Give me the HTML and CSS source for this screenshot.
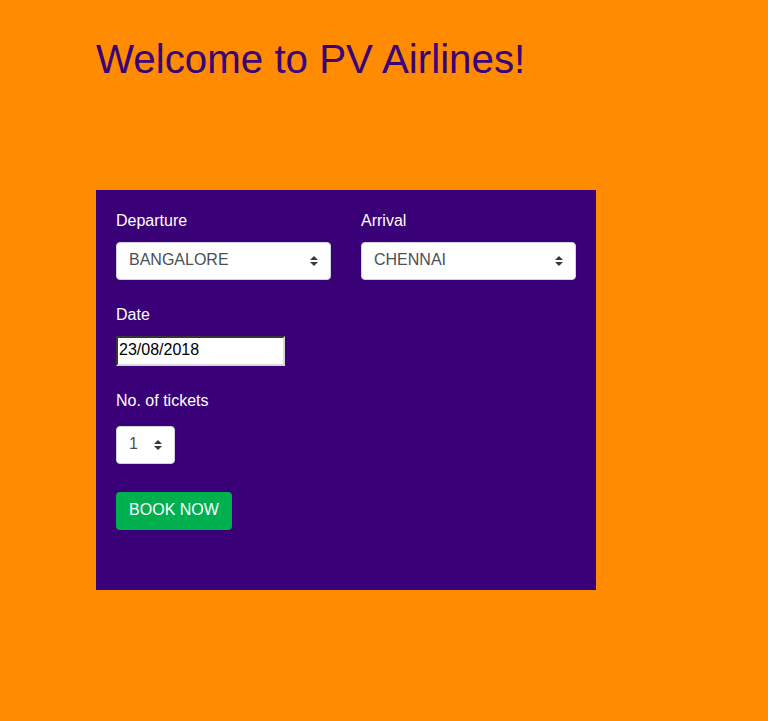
FILE: index.html
```html
<!DOCTYPE html>
<html>
<head>
<meta charset="utf-8">
<link rel="stylesheet" href="styles.css">
</head>
<body>
<div class="page">
  <h1 class="title">Welcome to PV Airlines!</h1>
  <form class="panel">
    <div class="row">
      <div class="field">
        <label class="label">Departure</label>
        <div class="select">
          <span>BANGALORE</span>
          <svg class="arrows" width="8" height="10" viewBox="0 0 8 10"><path d="M4 0 L8 4 L0 4 Z M0 6 L8 6 L4 10 Z" fill="#343a40"/></svg>
        </div>
      </div>
      <div class="field">
        <label class="label">Arrival</label>
        <div class="select">
          <span>CHENNAI</span>
          <svg class="arrows" width="8" height="10" viewBox="0 0 8 10"><path d="M4 0 L8 4 L0 4 Z M0 6 L8 6 L4 10 Z" fill="#343a40"/></svg>
        </div>
      </div>
    </div>
    <div class="group date-group">
      <label class="label">Date</label>
      <div class="date-input">23/08/2018</div>
    </div>
    <div class="group tickets-group">
      <label class="label tickets-label">No. of tickets</label>
      <div class="select small">
        <span>1</span>
        <svg class="arrows" width="8" height="10" viewBox="0 0 8 10"><path d="M4 0 L8 4 L0 4 Z M0 6 L8 6 L4 10 Z" fill="#343a40"/></svg>
      </div>
    </div>
    <button type="button" class="btn">BOOK NOW</button>
  </form>
</div>
</body>
</html>
```

FILE: styles.css
```css
html, body {
  margin: 0;
  padding: 0;
  background: #ff8c00;
  font-family: "Liberation Sans", Arial, sans-serif;
}
.page {
  padding-left: 96px;
  padding-top: 1px;
}
.title {
  margin: 35px 0 0 0;
  font-size: 40.3px;
  font-weight: normal;
  line-height: 48px;
  color: #3a0078;
}
.panel {
  margin-top: 106px;
  width: 500px;
  height: 400px;
  box-sizing: border-box;
  padding: 20px;
  background: #3a0078;
}
.row {
  display: flex;
  gap: 30px;
}
.field {
  width: 215px;
}
.label {
  display: block;
  color: #ffffff;
  font-size: 16px;
  line-height: 22px;
  margin-bottom: 10px;
}
.select {
  display: flex;
  align-items: center;
  justify-content: space-between;
  height: 38px;
  box-sizing: border-box;
  padding: 0 12px 3px 12px;
  background: #ffffff;
  border: 1px solid #ced4da;
  border-radius: 4px;
  color: #495057;
  font-size: 16px;
}
.select .arrows {
  margin-top: 3px;
}
.select.small {
  width: 59px;
}
.date-group {
  margin-top: 24px;
}
.date-input {
  width: 169px;
  height: 30px;
  box-sizing: border-box;
  border: 2px inset #767676;
  border-top-color: #8a8a8a;
  border-left-color: #8a8a8a;
  border-right-color: #d8d8d8;
  border-bottom-color: #d8d8d8;
  background: #ffffff;
  color: #000000;
  font-size: 16px;
  line-height: 24px;
  padding-left: 1px;
}
.tickets-group {
  margin-top: 24px;
}
.tickets-label {
  margin-bottom: 14px;
}
.btn {
  display: block;
  margin-top: 28px;
  width: 116px;
  height: 38px;
  border: none;
  border-radius: 4px;
  background: #00b04f;
  color: #ffffff;
  font-family: "Liberation Sans", Arial, sans-serif;
  font-size: 16px;
  padding: 0 0 2px 0;
}
```
